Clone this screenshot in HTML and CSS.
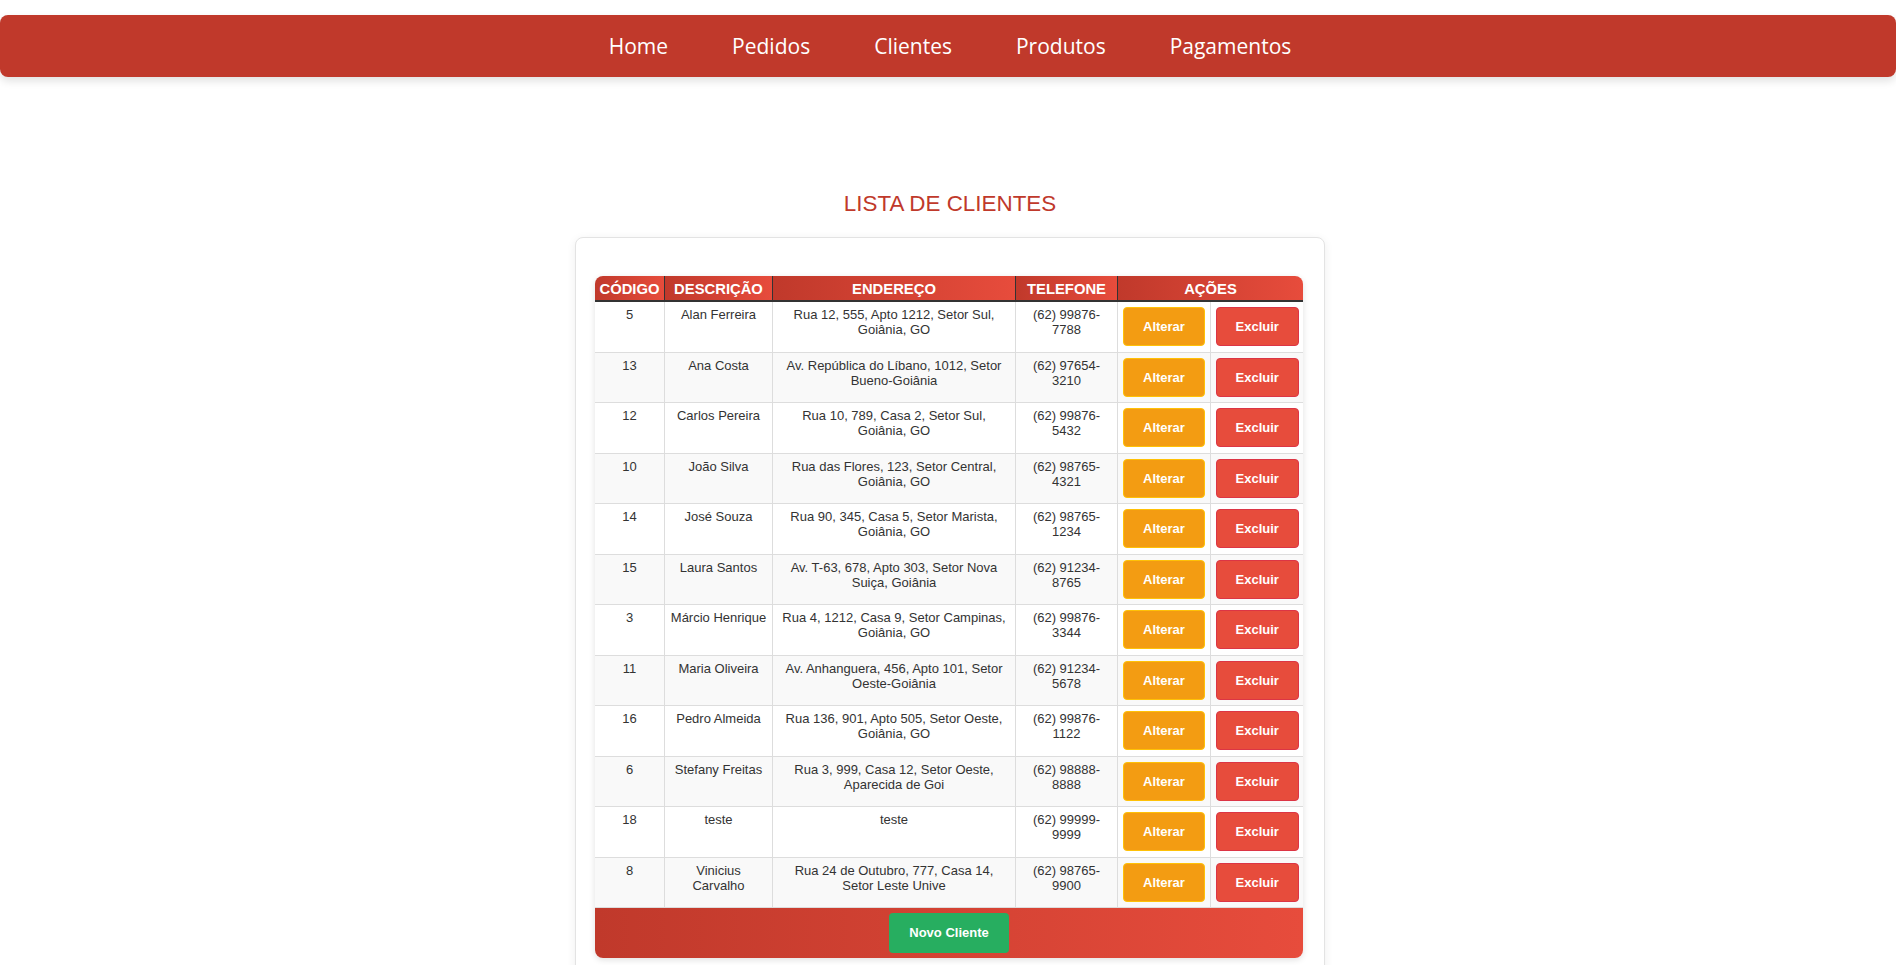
FILE: index.html
```html
<!DOCTYPE html>
<html lang="pt-BR">
<head>
<meta charset="utf-8">
<title>Lista de Clientes</title>
<link rel="stylesheet" href="styles.css">
</head>
<body>
<nav class="navbar">
  <a href="#">Home</a>
  <a href="#">Pedidos</a>
  <a href="#">Clientes</a>
  <a href="#">Produtos</a>
  <a href="#">Pagamentos</a>
</nav>
<main class="main">
  <h1 class="title">LISTA DE CLIENTES</h1>
  <section class="card">
    <div class="table-wrap">
      <table class="clients">
        <colgroup>
          <col class="c-cod"><col class="c-desc"><col class="c-end"><col class="c-tel"><col class="c-act"><col class="c-act">
        </colgroup>
        <thead>
          <tr><th>CÓDIGO</th><th>DESCRIÇÃO</th><th>ENDEREÇO</th><th>TELEFONE</th><th colspan="2">AÇÕES</th></tr>
        </thead>
        <tbody>
          <tr><td>5</td><td>Alan Ferreira</td><td>Rua 12, 555, Apto 1212, Setor Sul, Goiânia, GO</td><td>(62) 99876-7788</td><td class="act"><button class="btn btn-edit">Alterar</button></td><td class="act"><button class="btn btn-del">Excluir</button></td></tr>
          <tr><td>13</td><td>Ana Costa</td><td>Av. República do Líbano, 1012, Setor Bueno-Goiânia</td><td>(62) 97654-3210</td><td class="act"><button class="btn btn-edit">Alterar</button></td><td class="act"><button class="btn btn-del">Excluir</button></td></tr>
          <tr><td>12</td><td>Carlos Pereira</td><td>Rua 10, 789, Casa 2, Setor Sul, Goiânia, GO</td><td>(62) 99876-5432</td><td class="act"><button class="btn btn-edit">Alterar</button></td><td class="act"><button class="btn btn-del">Excluir</button></td></tr>
          <tr><td>10</td><td>João Silva</td><td>Rua das Flores, 123, Setor Central, Goiânia, GO</td><td>(62) 98765-4321</td><td class="act"><button class="btn btn-edit">Alterar</button></td><td class="act"><button class="btn btn-del">Excluir</button></td></tr>
          <tr><td>14</td><td>José Souza</td><td>Rua 90, 345, Casa 5, Setor Marista, Goiânia, GO</td><td>(62) 98765-1234</td><td class="act"><button class="btn btn-edit">Alterar</button></td><td class="act"><button class="btn btn-del">Excluir</button></td></tr>
          <tr><td>15</td><td>Laura Santos</td><td>Av. T-63, 678, Apto 303, Setor Nova Suiça, Goiânia</td><td>(62) 91234-8765</td><td class="act"><button class="btn btn-edit">Alterar</button></td><td class="act"><button class="btn btn-del">Excluir</button></td></tr>
          <tr><td>3</td><td>Márcio Henrique</td><td>Rua 4, 1212, Casa 9, Setor Campinas, Goiânia, GO</td><td>(62) 99876-3344</td><td class="act"><button class="btn btn-edit">Alterar</button></td><td class="act"><button class="btn btn-del">Excluir</button></td></tr>
          <tr><td>11</td><td>Maria Oliveira</td><td>Av. Anhanguera, 456, Apto 101, Setor Oeste-Goiânia</td><td>(62) 91234-5678</td><td class="act"><button class="btn btn-edit">Alterar</button></td><td class="act"><button class="btn btn-del">Excluir</button></td></tr>
          <tr><td>16</td><td>Pedro Almeida</td><td>Rua 136, 901, Apto 505, Setor Oeste, Goiânia, GO</td><td>(62) 99876-1122</td><td class="act"><button class="btn btn-edit">Alterar</button></td><td class="act"><button class="btn btn-del">Excluir</button></td></tr>
          <tr><td>6</td><td>Stefany Freitas</td><td>Rua 3, 999, Casa 12, Setor Oeste, Aparecida de Goi</td><td>(62) 98888-8888</td><td class="act"><button class="btn btn-edit">Alterar</button></td><td class="act"><button class="btn btn-del">Excluir</button></td></tr>
          <tr><td>18</td><td>teste</td><td>teste</td><td>(62) 99999-9999</td><td class="act"><button class="btn btn-edit">Alterar</button></td><td class="act"><button class="btn btn-del">Excluir</button></td></tr>
          <tr><td>8</td><td>Vinicius Carvalho</td><td>Rua 24 de Outubro, 777, Casa 14, Setor Leste Unive</td><td>(62) 98765-9900</td><td class="act"><button class="btn btn-edit">Alterar</button></td><td class="act"><button class="btn btn-del">Excluir</button></td></tr>
        </tbody>
      </table>
      <div class="table-footer">
        <button class="btn btn-new">Novo Cliente</button>
      </div>
    </div>
  </section>
</main>
</body>
</html>
```
FILE: styles.css
```css
html, body {
  margin: 0;
  padding: 0;
}

body {
  font-family: "Liberation Sans", Arial, sans-serif;
  background: #ffffff;
  color: #333333;
}

.navbar {
  margin-top: 15px;
  height: 62px;
  background: #c0392b;
  border-radius: 8px;
  box-shadow: 0 4px 8px rgba(0, 0, 0, 0.12);
  display: flex;
  justify-content: center;
  align-items: center;
  gap: 64px;
  padding-left: 4px;
}

.navbar a {
  font-family: "Open Sans", "Noto Sans", sans-serif;
  font-size: 21px;
  color: #ffffff;
  text-decoration: none;
}

.main {
  padding: 113px 0 40px 4px;
}

.title {
  margin: 0 0 20px;
  text-align: center;
  font-weight: normal;
  font-size: 22.4px;
  line-height: 27px;
  color: #c0392b;
}

.card {
  width: 750px;
  box-sizing: border-box;
  margin: 0 auto;
  border: 1px solid #e3e3e3;
  border-radius: 8px;
  box-shadow: 0 2px 10px rgba(0, 0, 0, 0.07);
  padding: 38px 21px 20px 19px;
  background: #ffffff;
}

.table-wrap {
  border-radius: 8px;
  overflow: hidden;
  box-shadow: 0 2px 6px rgba(0, 0, 0, 0.12);
}

.clients {
  width: 100%;
  border-collapse: separate;
  border-spacing: 0;
  table-layout: fixed;
  font-size: 13px;
}

.c-cod { width: 70px; }
.c-desc { width: 108px; }
.c-end { width: 243px; }
.c-tel { width: 102px; }
.c-act { width: 92.5px; }

.clients th {
  background: linear-gradient(to right, #c0392b, #e74c3c);
  color: #ffffff;
  font-size: 14.8px;
  font-weight: bold;
  line-height: 17px;
  padding: 5px 2px 2px;
  border-right: 1px solid #333333;
  border-bottom: 2px solid #333333;
  text-align: center;
  white-space: nowrap;
}

.clients th:last-child {
  border-right: 0;
}

.clients td {
  padding: 5.25px 5px;
  border-right: 1px solid #dddddd;
  border-bottom: 1px solid #dddddd;
  text-align: center;
  vertical-align: top;
  line-height: 15px;
  background: #ffffff;
}

.clients td:last-child {
  border-right: 0;
}

.clients tbody tr:nth-child(even) td {
  background: #f9f9f9;
}

.clients td.act {
  vertical-align: middle;
}

.btn {
  display: block;
  width: fit-content;
  margin: 0 auto;
  font-family: "Liberation Sans", Arial, sans-serif;
  font-size: 13px;
  font-weight: bold;
  line-height: 15px;
  color: #ffffff;
  padding: 11px 19px;
  border: 1px solid transparent;
  border-radius: 4px;
  cursor: pointer;
}

.btn-edit {
  background: #f39c12;
  border-color: #ffc107;
}

.btn-del {
  background: #e74c3c;
  border-color: #dc3545;
}

.table-footer {
  background: linear-gradient(to right, #c0392b, #e74c3c);
  padding: 5px;
  display: flex;
  justify-content: center;
}

.btn-new {
  background: #27ae60;
  border: none;
  padding: 12px 20px;
  line-height: 16px;
}
```
